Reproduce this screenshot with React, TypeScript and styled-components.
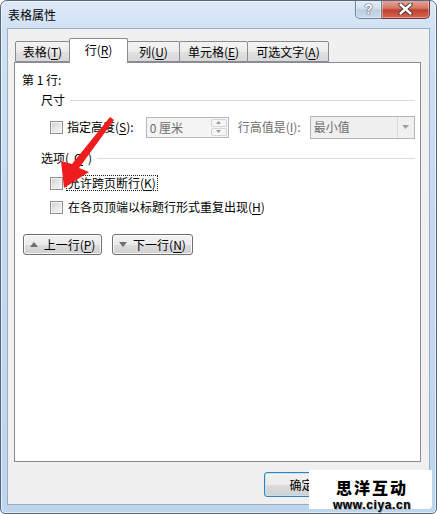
import React from "react";
import styled, { createGlobalStyle } from "styled-components";

const UI_FONT = `"Noto Sans CJK SC", "Noto Sans", "DejaVu Sans", sans-serif`;

const Global = createGlobalStyle`
  html, body { margin: 0; padding: 0; background: #ffffff; }
  body { font-family: ${UI_FONT}; font-size: 12px; }
`;

const Window = styled.div`
  position: relative;
  width: 437px;
  height: 514px;
  box-sizing: border-box;
  border: 1px solid #55687f;
  border-radius: 7px 7px 5px 5px;
  background: linear-gradient(180deg, #dde9f7 0%, #d0e1f4 6%, #c5daf1 40%, #bed5ee 100%);
  box-shadow: inset 0 0 0 1px rgba(255, 255, 255, 0.55);
  padding: 0 6px 8px 6px;
  display: flex;
  flex-direction: column;
  font-family: ${UI_FONT};
  font-size: 12px;
  color: #1b1b1b;
  overflow: hidden;
`;

const TitleBar = styled.div`
  height: 27px;
  display: flex;
  justify-content: space-between;
  align-items: flex-start;
  flex-shrink: 0;
`;

const Title = styled.div`
  align-self: center;
  padding-left: 1px;
  line-height: 16px;
  color: #000;
`;

const Controls = styled.div`
  display: flex;
  margin-top: -1px;
`;

const CtrlBtn = styled.div<{ $kind: "help" | "close" }>`
  height: 19px;
  box-sizing: border-box;
  width: ${(p) => (p.$kind === "help" ? "27px" : "48px")};
  border: 1px solid ${(p) => (p.$kind === "help" ? "#6f8197" : "#6e3b36")};
  border-top: none;
  border-left-width: ${(p) => (p.$kind === "help" ? "1px" : "0")};
  border-radius: ${(p) => (p.$kind === "help" ? "0 0 0 5px" : "0 0 5px 0")};
  background: ${(p) =>
    p.$kind === "help"
      ? "linear-gradient(180deg, #e6edf6 0%, #d6e1ed 45%, #bfcfe1 55%, #ccdaea 100%)"
      : "linear-gradient(180deg, #e9a99f 0%, #d47768 45%, #c2402f 55%, #d7654f 100%)"};
  box-shadow: inset 0 0 0 1px rgba(255, 255, 255, 0.35);
  display: flex;
  align-items: center;
  justify-content: center;
  font-family: "Liberation Sans", Arial, sans-serif;
  font-weight: bold;
  font-size: 14px;
  color: #ffffff;
  text-shadow: 0 0 1px #3c4a5a, 0 0 1px #3c4a5a, 0 0 1px #3c4a5a;
`;

const Client = styled.div`
  flex: 1;
  box-sizing: border-box;
  border: 1px solid #9aadc3;
  background: #f0f0f0;
  padding: 9px 8px 0 6px;
  display: flex;
  flex-direction: column;
`;

const TabStrip = styled.div`
  height: 24px;
  display: flex;
  align-items: flex-end;
  padding-left: 1px;
  position: relative;
  z-index: 1;
`;

const Tab = styled.div<{ $active?: boolean; $w: number }>`
  box-sizing: border-box;
  width: ${(p) => p.$w}px;
  height: ${(p) => (p.$active ? "25px" : "21px")};
  margin-bottom: ${(p) => (p.$active ? "-1px" : "0")};
  margin-left: -1px;
  border: 1px solid #898c95;
  border-bottom: ${(p) => (p.$active ? "none" : "1px solid #898c95")};
  border-radius: 2px 2px 0 0;
  background: ${(p) =>
    p.$active
      ? "#ffffff"
      : "linear-gradient(180deg, #f3f3f3 0%, #ececec 50%, #e0e0e0 51%, #d8d8d8 100%)"};
  display: flex;
  justify-content: center;
  align-items: ${(p) => (p.$active ? "flex-start" : "center")};
  padding-top: ${(p) => (p.$active ? "3px" : "0")};
  line-height: 16px;
  color: #000;
  white-space: nowrap;
  position: relative;
  z-index: ${(p) => (p.$active ? 2 : 1)};
  &:first-child { margin-left: 0; }
`;

const Panel = styled.div`
  height: 400px;
  box-sizing: border-box;
  border: 1px solid #898c95;
  background: #ffffff;
  padding: 10px 5px 0 7px;
  display: flex;
  flex-direction: column;
  flex-shrink: 0;
`;

const Mn = styled.u`
  text-decoration: underline;
  text-underline-offset: 2px;
  text-decoration-thickness: 1px;
`;

const RowLabel = styled.div`
  line-height: 14px;
  height: 14px;
  color: #000;
`;

const GroupHeader = styled.div<{ $top: number }>`
  margin-top: ${(p) => p.$top}px;
  height: 14px;
  padding-left: 19px;
  display: flex;
  align-items: center;
  gap: 5px;
  line-height: 14px;
  color: #000;
  &::after {
    content: "";
    flex: 1;
    height: 1px;
    background: #dcdcdc;
  }
`;

const HeightRow = styled.div`
  margin-top: 8px;
  height: 24px;
  padding-left: 28px;
  display: flex;
  align-items: center;
`;

const CheckRow = styled.div<{ $top: number }>`
  margin-top: ${(p) => p.$top}px;
  height: 16px;
  padding-left: 28px;
  display: flex;
  align-items: center;
  gap: 4px;
`;

const Box = styled.span`
  width: 13px;
  height: 13px;
  box-sizing: border-box;
  border: 1px solid #8e8f8f;
  background: linear-gradient(135deg, #cdd0d4 0%, #e4e6e8 50%, #f7f7f7 100%);
  box-shadow: inset 0 0 0 1px #f4f4f4;
  flex-shrink: 0;
`;

const CheckText = styled.span<{ $focus?: boolean }>`
  line-height: 14px;
  color: #000;
  outline: ${(p) => (p.$focus ? "1px dotted #222" : "none")};
  outline-offset: 0px;
  padding: 0 1px;
`;

const Label = styled.span<{ $disabled?: boolean; $gap: number; $lead?: number }>`
  margin-left: ${(p) => p.$lead ?? 0}px;
  margin-right: ${(p) => p.$gap}px;
  color: ${(p) => (p.$disabled ? "#6d6d6d" : "#000")};
  line-height: 14px;
  white-space: nowrap;
`;

const Spin = styled.div`
  width: 83px;
  height: 21px;
  box-sizing: border-box;
  border: 1px solid #b4b9bd;
  background: #f4f4f4;
  display: flex;
  margin-right: 9px;
`;

const FieldValue = styled.span`
  flex: 1;
  padding-left: 3px;
  line-height: 19px;
  color: #6d6d6d;
  white-space: nowrap;
`;

const SpinButtons = styled.div`
  width: 16px;
  display: flex;
  flex-direction: column;
  padding: 1px;
  gap: 1px;
`;

const SpinBtn = styled.span`
  flex: 1;
  box-sizing: border-box;
  border: 1px solid #d4d4d4;
  border-radius: 2px;
  background: #f6f6f6;
  display: flex;
  align-items: center;
  justify-content: center;
`;

const Select = styled.div`
  width: 105px;
  height: 23px;
  box-sizing: border-box;
  border: 1px solid #b0b5b8;
  background: #f0f0f0;
  display: flex;
  align-items: stretch;
`;

const SelectArrow = styled.span`
  width: 16px;
  border-left: 1px solid #dadada;
  display: flex;
  align-items: center;
  justify-content: center;
`;

const NavRow = styled.div`
  margin-top: 19px;
  padding-left: 1px;
  display: flex;
  gap: 10px;
`;

const PushButton = styled.div<{ $w: number; $h: number; $default?: boolean }>`
  width: ${(p) => p.$w}px;
  height: ${(p) => p.$h}px;
  box-sizing: border-box;
  border: 1px solid ${(p) => (p.$default ? "#3c7fb1" : "#707070")};
  border-radius: 3px;
  background: linear-gradient(180deg, #f2f2f2 0%, #ebebeb 50%, #dddddd 51%, #cfcfcf 100%);
  box-shadow: inset 0 0 0 1px ${(p) => (p.$default ? "#bfe4f9" : "rgba(255,255,255,0.8)")};
  display: flex;
  align-items: center;
  justify-content: center;
  gap: 6px;
  line-height: 14px;
  color: #000;
  white-space: nowrap;
`;

const Footer = styled.div`
  flex: 1;
  padding-top: 10px;
  padding-right: 82px;
  display: flex;
  justify-content: flex-end;
  align-items: flex-start;
`;

const Overlay = styled.svg`
  position: absolute;
  left: -1px;
  top: -1px;
  width: 437px;
  height: 514px;
  pointer-events: none;
`;

const Watermark = styled.div`
  position: absolute;
  left: 308px;
  top: 469px;
  width: 123px;
  height: 39px;
  background: #ffffff;
  border-radius: 0 0 4px 0;
  display: flex;
  flex-direction: column;
  align-items: center;
  padding-top: 8px;
  box-sizing: border-box;
  padding-left: 3px;
`;

const WmTitle = styled.div`
  font-family: "Noto Sans CJK SC", sans-serif;
  font-weight: 900;
  font-size: 16px;
  line-height: 18px;
  height: 18px;
  letter-spacing: 2px;
  color: #000;
`;

const WmUrl = styled.div`
  font-family: "Liberation Sans", Arial, sans-serif;
  font-weight: bold;
  font-size: 12px;
  line-height: 12px;
  height: 12px;
  margin-top: 3px;
  letter-spacing: 0.6px;
  color: #000;
  text-shadow: 0 0 1px #9a9a9a, 1px 1px 0 #b5b5b5;
`;

const Tri = ({ dir, color = "#6f6f6f", w = 8, h = 5 }: { dir: "up" | "down"; color?: string; w?: number; h?: number }) => (
  <svg width={w} height={h} viewBox={`0 0 ${w} ${h}`}>
    <polygon
      points={dir === "up" ? `0,${h} ${w / 2},0 ${w},${h}` : `0,0 ${w},0 ${w / 2},${h}`}
      fill={color}
    />
  </svg>
);

export default function App() {
  return (
    <>
      <Global />
      <Window>
        <TitleBar>
          <Title>表格属性</Title>
          <Controls>
            <CtrlBtn $kind="help">?</CtrlBtn>
            <CtrlBtn $kind="close">
              <svg width="15" height="12" viewBox="0 0 15 12">
                <path d="M2.5 1.5 L12.5 10.5 M12.5 1.5 L2.5 10.5" stroke="#3a2a2a" strokeWidth="4.2" strokeLinecap="round" />
                <path d="M2.5 1.5 L12.5 10.5 M12.5 1.5 L2.5 10.5" stroke="#ffffff" strokeWidth="2.4" strokeLinecap="round" />
              </svg>
            </CtrlBtn>
          </Controls>
        </TitleBar>

        <Client>
          <TabStrip>
            <Tab $w={55}>表格(<Mn>T</Mn>)</Tab>
            <Tab $w={59} $active>行(<Mn>R</Mn>)</Tab>
            <Tab $w={53}>列(<Mn>U</Mn>)</Tab>
            <Tab $w={69}>单元格(<Mn>E</Mn>)</Tab>
            <Tab $w={82}>可选文字(<Mn>A</Mn>)</Tab>
          </TabStrip>

          <Panel>
            <RowLabel>第 1 行:</RowLabel>

            <GroupHeader $top={6}>尺寸</GroupHeader>

            <HeightRow>
              <Box />
              <Label $gap={12} $lead={4}>
                指定高度(<Mn>S</Mn>):
              </Label>
              <Spin>
                <FieldValue>0 厘米</FieldValue>
                <SpinButtons>
                  <SpinBtn>
                    <Tri dir="up" w={5} h={3} color="#9a9a9a" />
                  </SpinBtn>
                  <SpinBtn>
                    <Tri dir="down" w={5} h={3} color="#9a9a9a" />
                  </SpinBtn>
                </SpinButtons>
              </Spin>
              <Label $disabled $gap={9}>
                行高值是(<Mn>I</Mn>):
              </Label>
              <Select>
                <FieldValue>最小值</FieldValue>
                <SelectArrow>
                  <Tri dir="down" w={7} h={4} color="#a0a0a0" />
                </SelectArrow>
              </Select>
            </HeightRow>

            <GroupHeader $top={12}>选项(<Mn>O</Mn>)</GroupHeader>

            <CheckRow $top={10}>
              <Box />
              <CheckText $focus>
                允许跨页断行(<Mn>K</Mn>)
              </CheckText>
            </CheckRow>

            <CheckRow $top={8}>
              <Box />
              <CheckText>
                在各页顶端以标题行形式重复出现(<Mn>H</Mn>)
              </CheckText>
            </CheckRow>

            <NavRow>
              <PushButton $w={79} $h={21}>
                <Tri dir="up" />
                <span>
                  上一行(<Mn>P</Mn>)
                </span>
              </PushButton>
              <PushButton $w={81} $h={21}>
                <Tri dir="down" />
                <span>
                  下一行(<Mn>N</Mn>)
                </span>
              </PushButton>
            </NavRow>
          </Panel>

          <Footer>
            <PushButton $w={75} $h={25} $default>
              确定
            </PushButton>
          </Footer>
        </Client>

        <Overlay viewBox="0 0 437 514">
          <polygon
            points="64,188 61,161 72,164 110,117 114,120 79,168 89,172"
            fill="#ee1c1c"
          />
        </Overlay>

        <Watermark>
          <WmTitle>思洋互动</WmTitle>
          <WmUrl>www.ciya.cn</WmUrl>
        </Watermark>
      </Window>
    </>
  );
}
